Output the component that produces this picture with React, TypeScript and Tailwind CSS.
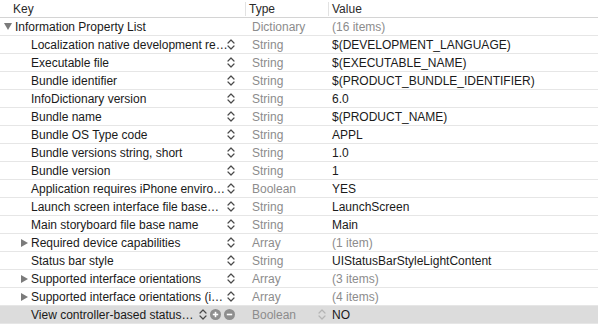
import React from "react";

type Row = {
    key: string;
    type: string;
    value: string;
    level: number;
    disclosure?: "open" | "closed";
    muted?: boolean;
    selected?: boolean;
};

const rows: Row[] = [
    { key: "Information Property List", type: "Dictionary", value: "(16 items)", level: 0, disclosure: "open", muted: true },
    { key: "Localization native development re…", type: "String", value: "$(DEVELOPMENT_LANGUAGE)", level: 1 },
    { key: "Executable file", type: "String", value: "$(EXECUTABLE_NAME)", level: 1 },
    { key: "Bundle identifier", type: "String", value: "$(PRODUCT_BUNDLE_IDENTIFIER)", level: 1 },
    { key: "InfoDictionary version", type: "String", value: "6.0", level: 1 },
    { key: "Bundle name", type: "String", value: "$(PRODUCT_NAME)", level: 1 },
    { key: "Bundle OS Type code", type: "String", value: "APPL", level: 1 },
    { key: "Bundle versions string, short", type: "String", value: "1.0", level: 1 },
    { key: "Bundle version", type: "String", value: "1", level: 1 },
    { key: "Application requires iPhone enviro…", type: "Boolean", value: "YES", level: 1 },
    { key: "Launch screen interface file base…", type: "String", value: "LaunchScreen", level: 1 },
    { key: "Main storyboard file base name", type: "String", value: "Main", level: 1 },
    { key: "Required device capabilities", type: "Array", value: "(1 item)", level: 1, disclosure: "closed", muted: true },
    { key: "Status bar style", type: "String", value: "UIStatusBarStyleLightContent", level: 1 },
    { key: "Supported interface orientations", type: "Array", value: "(3 items)", level: 1, disclosure: "closed", muted: true },
    { key: "Supported interface orientations (i…", type: "Array", value: "(4 items)", level: 1, disclosure: "closed", muted: true },
    { key: "View controller-based status…", type: "Boolean", value: "NO", level: 1, selected: true },
];

function Stepper({ light }: { light?: boolean }) {
    return (
        <svg width="8" height="13" viewBox="0 0 8 13" className="shrink-0">
            <path
                d="M1 5 L4 2 L7 5 M1 8 L4 11 L7 8"
                fill="none"
                stroke={light ? "#b4b4b4" : "#4a4a4a"}
                strokeWidth="1.2"
                strokeLinecap="round"
                strokeLinejoin="round"
            />
        </svg>
    );
}

function RoundButton({ plus }: { plus?: boolean }) {
    return (
        <svg width="11" height="11" viewBox="0 0 11 11" className="shrink-0">
            <circle cx="5.5" cy="5.5" r="5.5" fill="#8e8e8e" />
            <path d="M2.8 5.5 H8.2" stroke="#fff" strokeWidth="1.6" />
            {plus && <path d="M5.5 2.8 V8.2" stroke="#fff" strokeWidth="1.6" />}
        </svg>
    );
}

function Triangle({ open }: { open: boolean }) {
    return open ? (
        <svg width="8" height="7" viewBox="0 0 8 7" className="shrink-0">
            <path d="M0 0 H8 L4 7 Z" fill="#7b7b7b" />
        </svg>
    ) : (
        <svg width="7" height="8" viewBox="0 0 7 8" className="shrink-0">
            <path d="M0 0 V8 L7 4 Z" fill="#7b7b7b" />
        </svg>
    );
}

export default function App() {
    return (
        <div
            className="h-[329px] w-[598px] overflow-hidden bg-white text-[12px] text-[#1a1a1a]"
            style={{ fontFamily: '"Liberation Sans", Arial, sans-serif' }}
        >
            <div className="flex h-[18px] items-center border-b border-[#d4d4d4] text-[#2a2a2a]">
                <div className="w-[245px] pl-[13px]">Key</div>
                <div className="h-[14px] w-px bg-[#e2e2e2]" />
                <div className="w-[82px] pl-[3px]">Type</div>
                <div className="h-[14px] w-px bg-[#e2e2e2]" />
                <div className="flex-1 pl-[3px]">Value</div>
            </div>
            {rows.map((row, i) => (
                <div
                    key={i}
                    className={`flex h-[18px] items-center border-b border-[#e6e6e6] ${row.selected ? "bg-[#dcdcdc]" : ""}`}
                >
                    <div className="flex w-[246px] shrink-0 items-center pr-[11px]">
                        <div className={`flex shrink-0 items-center ${row.level === 0 ? "w-[15px] pl-[4px]" : "w-[31px] pl-[21px]"}`}>
                            {row.disclosure && <Triangle open={row.disclosure === "open"} />}
                        </div>
                        <span className="min-w-0 flex-1 whitespace-nowrap">{row.key}</span>
                        {row.level > 0 && (
                            <div className="flex shrink-0 items-center gap-[3px] pl-[4px]">
                                <Stepper />
                                {row.selected && (
                                    <>
                                        <RoundButton plus />
                                        <RoundButton />
                                    </>
                                )}
                            </div>
                        )}
                    </div>
                    <div className="w-[72px] shrink-0 pl-[6px] text-[#8c8c8c]">{row.type}</div>
                    <div className="w-[14px] shrink-0">
                        {row.selected && <Stepper light />}
                    </div>
                    <div className={`flex-1 whitespace-nowrap ${row.muted ? "text-[#8c8c8c]" : ""}`}>
                        {row.value}
                    </div>
                </div>
            ))}
        </div>
    );
}
